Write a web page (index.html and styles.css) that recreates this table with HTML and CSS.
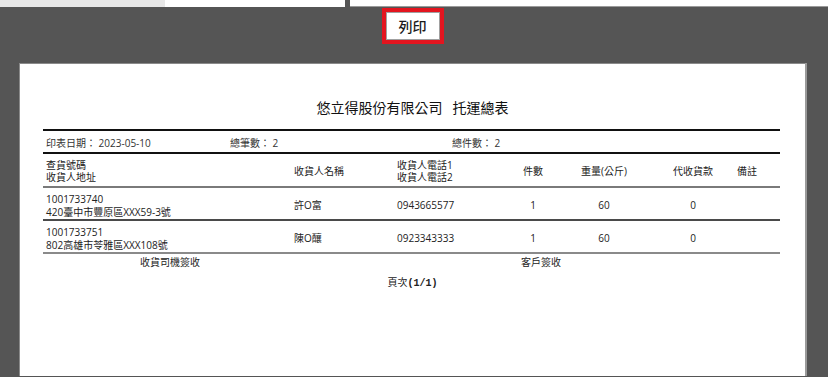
FILE: index.html
```html
<!DOCTYPE html>
<html lang="zh-Hant">
<head>
<meta charset="utf-8">
<title>托運總表</title>
<link rel="stylesheet" href="styles.css">
</head>
<body>
<div class="topbar">
  <div class="tb-gray"></div>
  <div class="tb-white"></div>
  <div class="tb-right"></div>
</div>
<div class="toolbar">
  <button class="print-btn">列印</button>
</div>
<div class="paper">
  <div class="title">悠立得股份有限公司<span class="title-sub">托運總表</span></div>
  <div class="report">
    <div class="info-row">
      <div>印表日期： 2023-05-10</div>
      <div>總筆數： 2</div>
      <div>總件數： 2</div>
    </div>
    <div class="grid head-row">
      <div class="left two-line">查貨號碼<br>收貨人地址</div>
      <div class="left">收貨人名稱</div>
      <div class="left two-line">收貨人電話1<br>收貨人電話2</div>
      <div class="center">件數</div>
      <div class="center">重量(公斤)</div>
      <div class="center">代收貨款</div>
      <div class="left">備註</div>
    </div>
    <div class="grid data-row row-a">
      <div class="left two-line">1001733740<br>420臺中市豐原區XXX59-3號</div>
      <div class="left">許O富</div>
      <div class="left">0943665577</div>
      <div class="center">1</div>
      <div class="center">60</div>
      <div class="center">0</div>
      <div class="left"></div>
    </div>
    <div class="grid data-row row-b">
      <div class="left two-line">1001733751<br>802高雄市苓雅區XXX108號</div>
      <div class="left">陳O釀</div>
      <div class="left">0923343333</div>
      <div class="center">1</div>
      <div class="center">60</div>
      <div class="center">0</div>
      <div class="left"></div>
    </div>
    <div class="sign-row">
      <div>收貨司機簽收</div>
      <div class="sign-cust">客戶簽收</div>
    </div>
  </div>
  <div class="page-no">頁次<span class="mono">(1/1)</span></div>
</div>
</body>
</html>
```

FILE: styles.css
```css
html, body {
  margin: 0;
  padding: 0;
  height: 100%;
  overflow: hidden;
}
body {
  background: #555555;
  font-family: "Open Sans", "Noto Sans CJK TC", sans-serif;
  color: #222;
}
.topbar {
  display: flex;
  height: 7px;
}
.tb-gray {
  width: 165px;
  background: #e8e8e8;
}
.tb-white {
  width: 180px;
  background: #ffffff;
}
.tb-right {
  margin-left: 5px;
  flex: 1;
  height: 6px;
  background: #ffffff;
  border-bottom: 1px solid #9a9a9a;
}
.toolbar {
  display: flex;
  justify-content: center;
  padding-top: 1px;
  padding-right: 3px;
  height: 56px;
  box-sizing: border-box;
}
.print-btn {
  width: 62px;
  height: 36px;
  box-sizing: border-box;
  border: 4px solid #e3151f;
  outline: none;
  background: #fff;
  box-shadow: inset 0 0 0 1px #a0a0a0;
  font-family: "Noto Sans CJK TC", sans-serif;
  font-size: 14px;
  font-weight: 500;
  color: #1a1a1a;
  padding: 0;
  line-height: 26px;
}
.paper {
  margin-left: 19px;
  width: 786px;
  height: 313px;
  box-sizing: border-box;
  background: #fff;
  border-top: 1px solid #8a8a8a;
  border-left: 1px solid #8a8a8a;
  box-shadow: 2px 0 0 #9a9a9a;
  padding: 33px 25px 0 23px;
}
.title {
  font-family: "Noto Sans CJK TC", sans-serif;
  font-size: 14px;
  line-height: 20px;
  text-align: center;
  color: #111;
  margin-bottom: 12px;
  padding-left: 2px;
}
.title-sub {
  margin-left: 10px;
}
.report {
  width: 737px;
  font-size: 10px;
}
.info-row {
  display: grid;
  grid-template-columns: 184px 222px 1fr;
  border-top: 2px solid #111;
  border-bottom: 2px solid #111;
  height: 25px;
  box-sizing: border-box;
  align-items: center;
  padding-left: 3px;
  padding-top: 1px;
  color: #333;
}
.grid {
  display: grid;
  grid-template-columns: 248px 103px 116px 46px 96px 82px 1fr;
  align-items: center;
  box-sizing: border-box;
}
.left {
  padding-left: 3px;
}
.center {
  text-align: center;
}
.head-row {
  height: 34px;
  line-height: 12.5px;
  padding-top: 3px;
  padding-bottom: 1px;
  border-bottom: 2px solid #7a7a7a;
}
.data-row {
  height: 33px;
  line-height: 13px;
  padding-top: 4px;
}
.row-a {
  border-bottom: 2px solid #4a4a4a;
}
.row-b {
  border-bottom: 2px solid #8a8a8a;
}
.sign-row {
  display: grid;
  grid-template-columns: 254px 1fr;
  text-align: center;
  line-height: 16px;
  padding-top: 0;
}
.sign-cust {
  padding-left: 5px;
}
.page-no {
  margin-top: 5px;
  font-size: 10px;
  line-height: 14px;
  text-align: center;
  padding-left: 2px;
}
.mono {
  font-family: "Liberation Mono", monospace;
  font-weight: bold;
}
```
